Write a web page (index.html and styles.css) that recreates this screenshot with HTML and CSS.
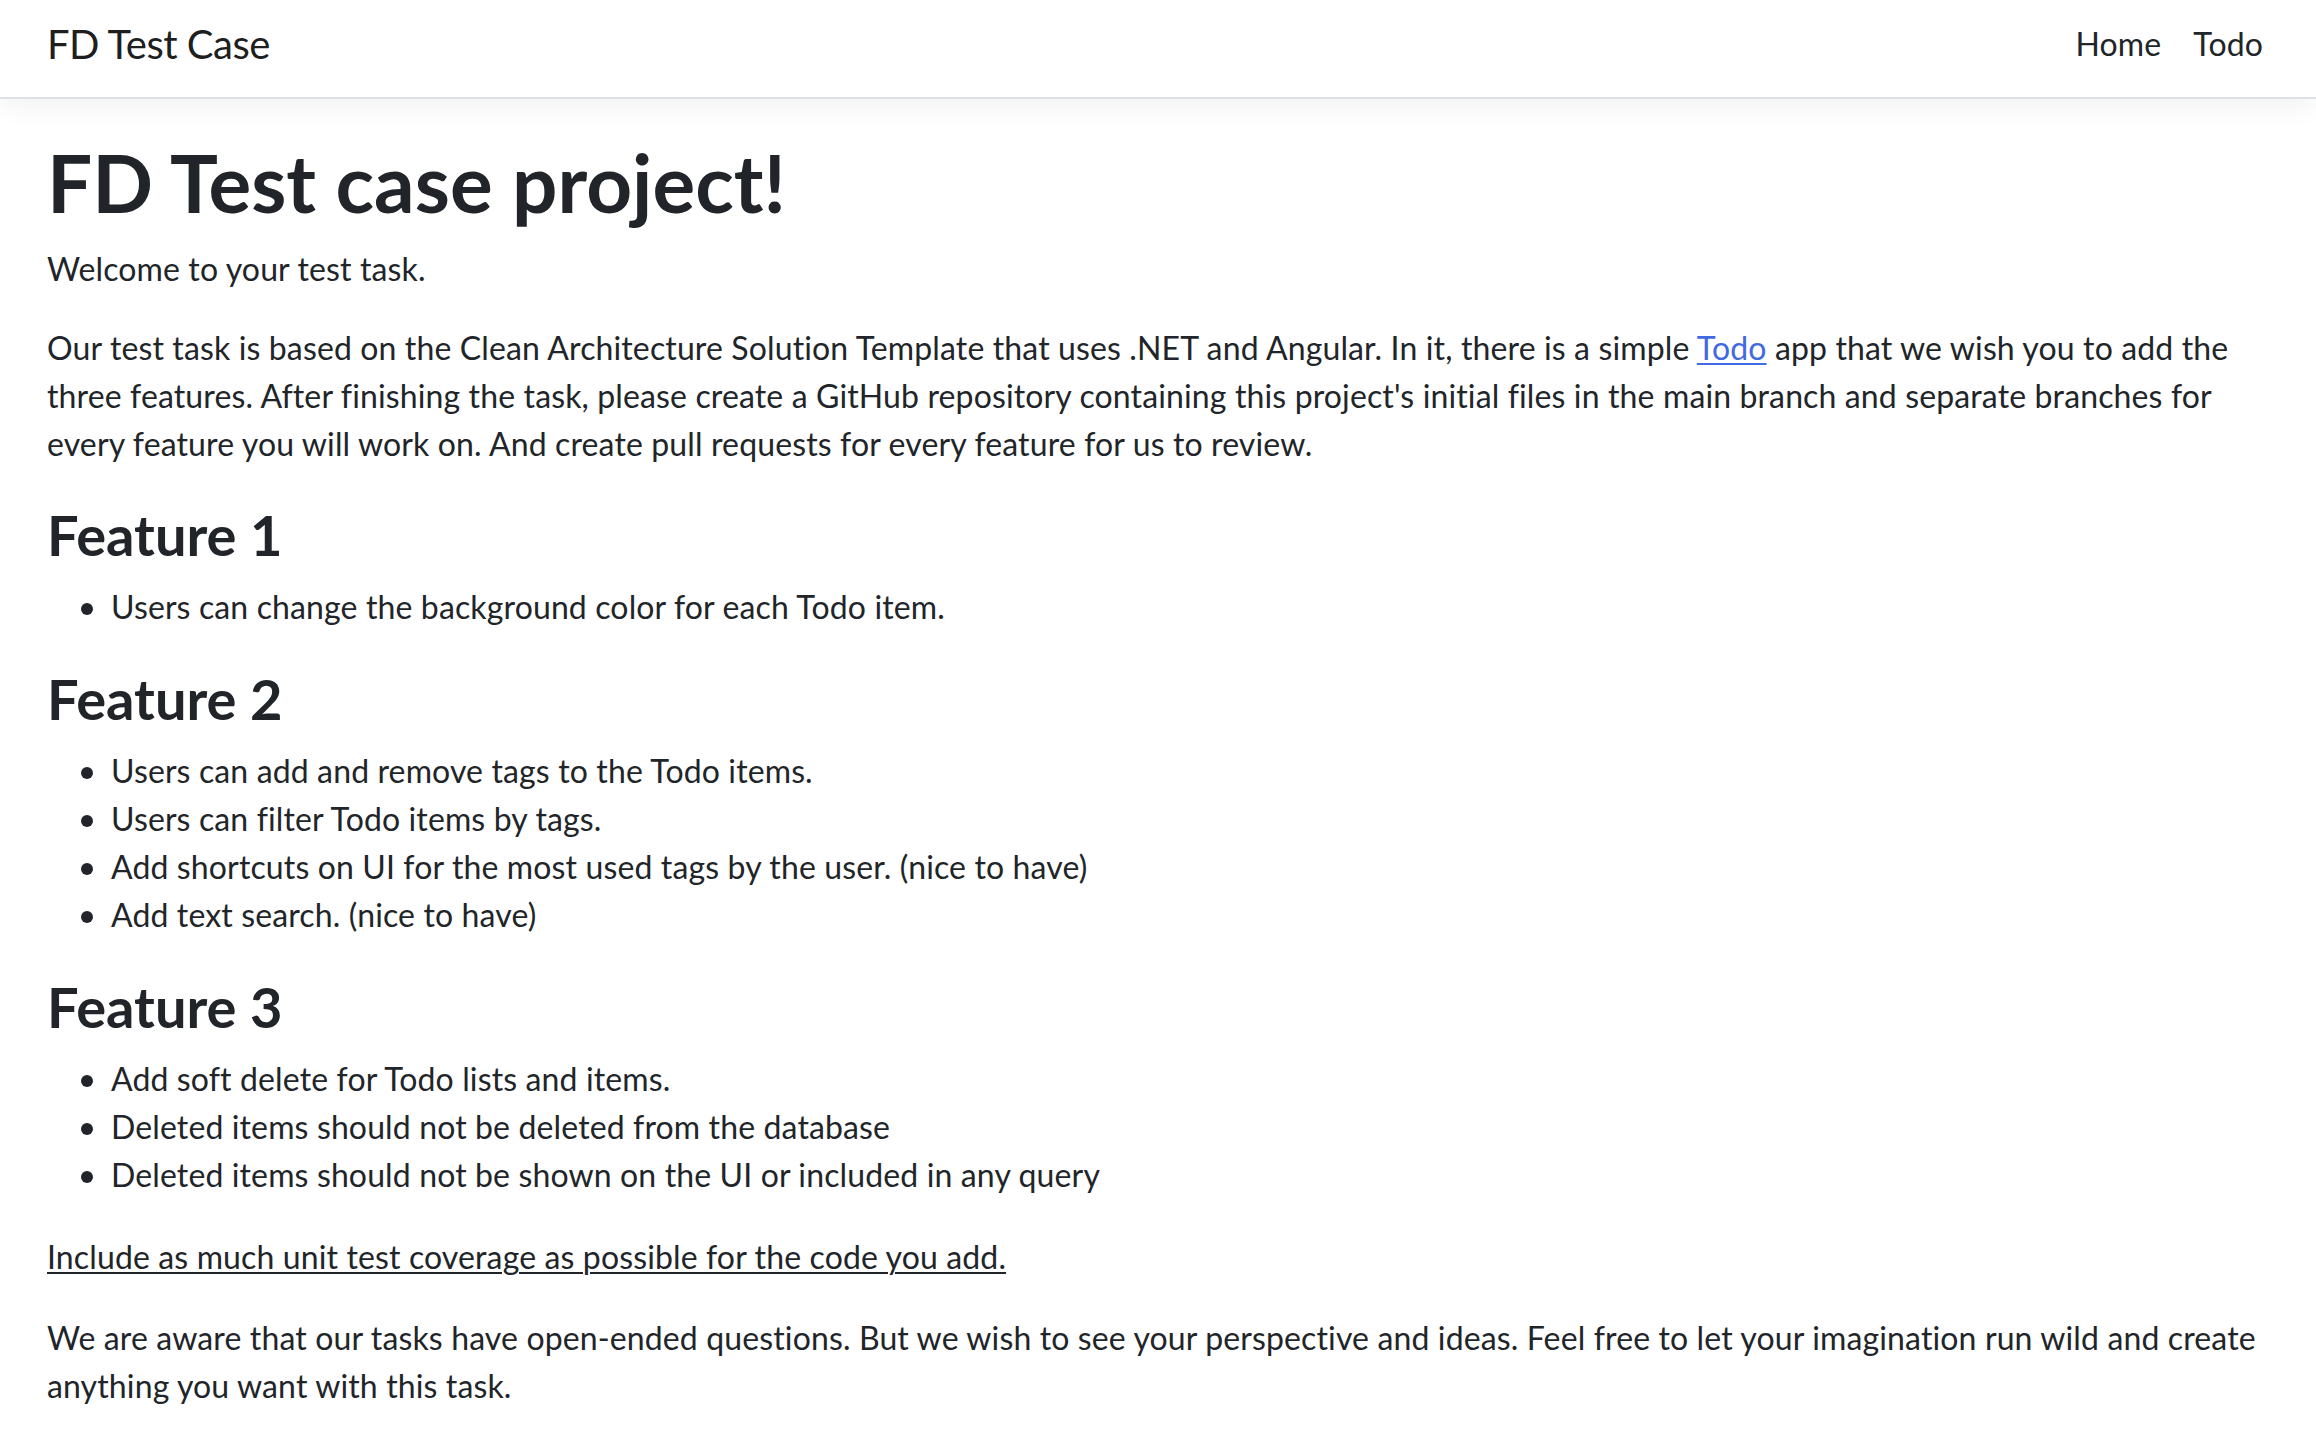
FILE: index.html
```html
<!DOCTYPE html>
<html lang="en">
<head>
<meta charset="utf-8">
<title>FD Test Case</title>
<link rel="stylesheet" href="styles.css">
</head>
<body>
<header class="navbar">
  <a class="brand" href="#">FD Test Case</a>
  <ul class="nav-list">
    <li><a class="nav-link" href="#">Home</a></li>
    <li><a class="nav-link" href="#">Todo</a></li>
  </ul>
</header>
<main class="content">
  <h1 class="title">FD Test case project!</h1>
  <p class="welcome">Welcome to your test task.</p>
  <p>Our test task is based on the Clean Architecture Solution Template that uses .NET and Angular. In it, there is a simple <a class="link" href="#">Todo</a> app that we wish you to add the three features. After finishing the task, please create a GitHub repository containing this project's initial files in the main branch and separate branches for every feature you will work on. And create pull requests for every feature for us to review.</p>
  <h3 class="feature">Feature 1</h3>
  <ul class="list">
    <li>Users can change the background color for each Todo item.</li>
  </ul>
  <h3 class="feature">Feature 2</h3>
  <ul class="list">
    <li>Users can add and remove tags to the Todo items.</li>
    <li>Users can filter Todo items by tags.</li>
    <li>Add shortcuts on UI for the most used tags by the user. (nice to have)</li>
    <li>Add text search. (nice to have)</li>
  </ul>
  <h3 class="feature">Feature 3</h3>
  <ul class="list">
    <li>Add soft delete for Todo lists and items.</li>
    <li>Deleted items should not be deleted from the database</li>
    <li>Deleted items should not be shown on the UI or included in any query</li>
  </ul>
  <p><u class="underline">Include as much unit test coverage as possible for the code you add.</u></p>
  <p>We are aware that our tasks have open-ended questions. But we wish to see your perspective and ideas. Feel free to let your imagination run wild and create anything you want with this task.</p>
</main>
</body>
</html>
```
FILE: styles.css
```css
html, body {
  margin: 0;
  padding: 0;
  background: #fff;
}
body {
  font-family: Lato, "Liberation Sans", sans-serif;
  font-size: 32px;
  line-height: 48px;
  letter-spacing: 0.13px;
  color: #212529;
}
.navbar {
  display: flex;
  justify-content: space-between;
  align-items: flex-start;
  height: 97px;
  padding: 0 37px 0 47px;
  border-bottom: 2px solid #dee2e6;
  box-shadow: 0 8px 24px rgba(0, 0, 0, 0.05);
  background: #fff;
}
.brand {
  margin-top: 14px;
  font-size: 40px;
  line-height: 60px;
  color: rgba(0, 0, 0, 0.9);
  text-decoration: none;
  letter-spacing: -0.5px;
}
.nav-list {
  display: flex;
  list-style: none;
  margin: 20px 0 0;
  padding: 0;
}
.nav-link {
  display: block;
  padding: 0 16px;
  color: #212529;
  text-decoration: none;
}
.content {
  padding: 35px 47px 40px;
}
.title {
  margin: 0 0 15px;
  font-size: 80px;
  line-height: 96px;
  font-weight: 700;
  letter-spacing: 0;
}
p {
  margin: 0 0 33px;
}
.welcome {
  margin-bottom: 31px;
}
.link {
  color: #4169e1;
  text-decoration: underline;
  text-decoration-thickness: 2px;
  text-underline-offset: 3px;
}
.feature {
  margin: 0 0 15px;
  font-size: 56px;
  line-height: 67px;
  font-weight: 700;
  letter-spacing: 0;
}
.list {
  margin: 0 0 34px;
  padding-left: 64px;
  list-style: none;
}
.list li::before {
  content: "";
  display: inline-block;
  width: 12px;
  height: 12px;
  border-radius: 50%;
  background: #212529;
  margin-left: -30px;
  margin-right: 18px;
  vertical-align: 4px;
}
.underline {
  text-decoration: underline;
  text-decoration-thickness: 2px;
  text-underline-offset: 3px;
}
```
